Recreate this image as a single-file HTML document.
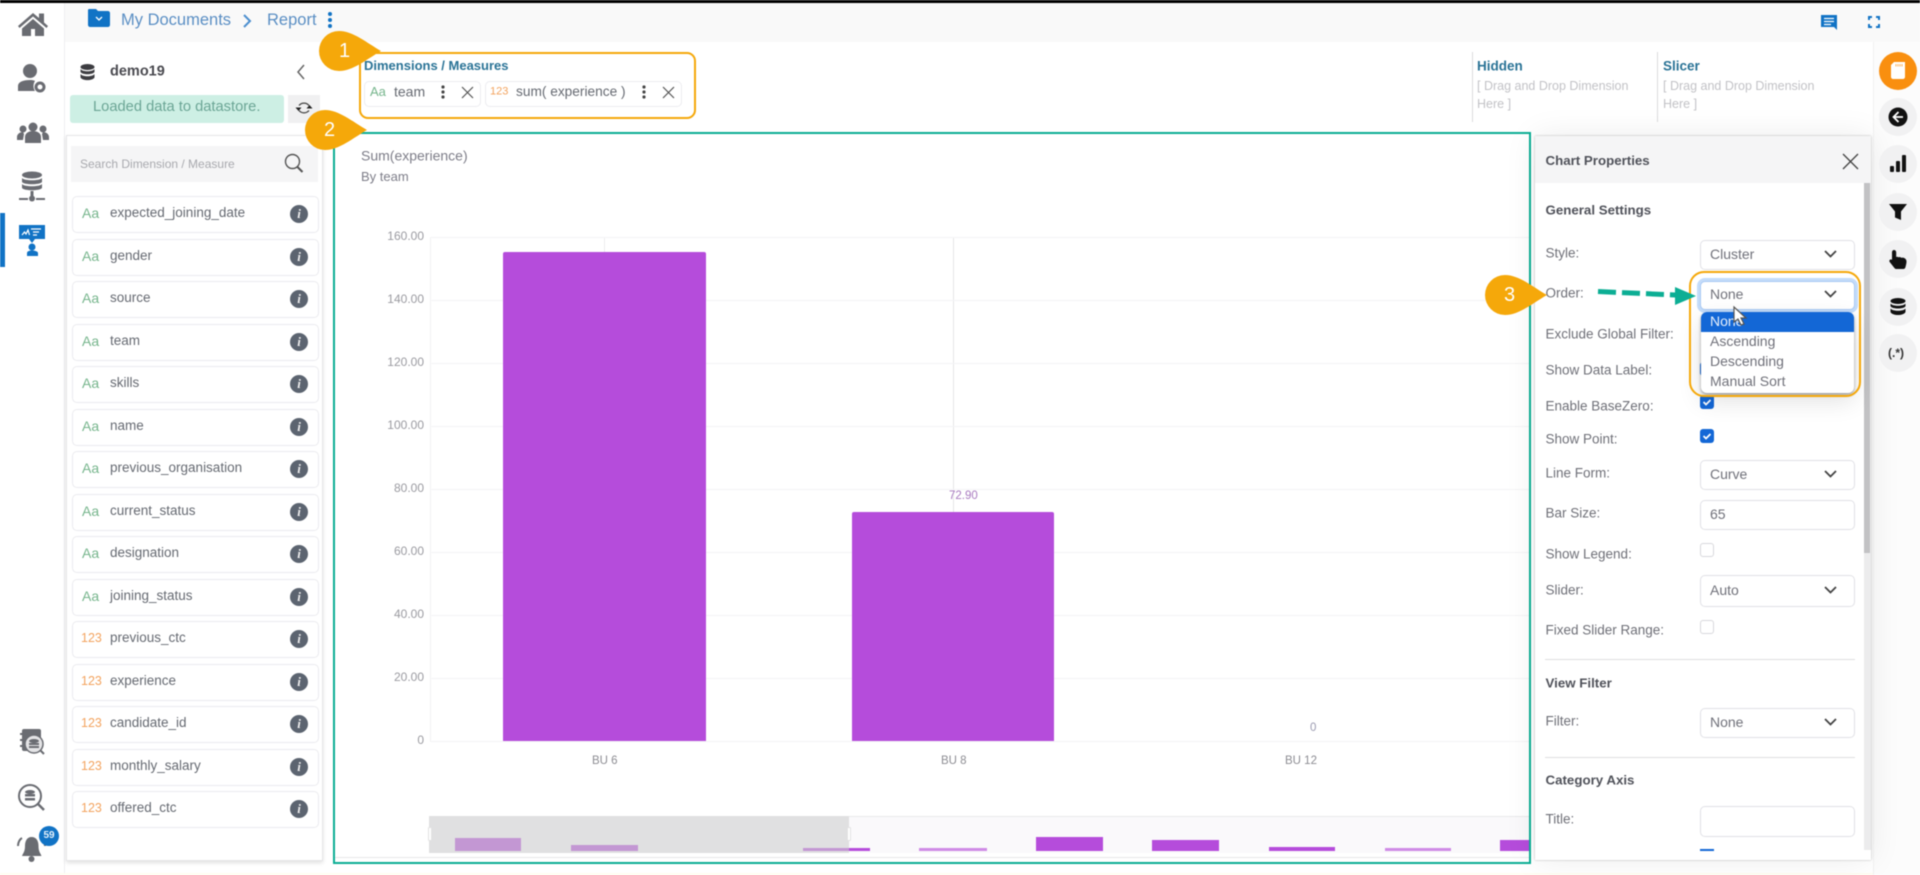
<!DOCTYPE html>
<html><head><meta charset="utf-8"><title>Report</title>
<style>
html,body{margin:0;padding:0;background:#fff;width:1920px;height:875px;overflow:hidden}
body{font-family:"Liberation Sans",sans-serif;color:#666}
#w{position:absolute;left:0;top:0;width:1920px;height:875px;overflow:hidden;filter:blur(.4px)}
.a{position:absolute}
.t{position:absolute;white-space:nowrap;transform:translateY(-50%);line-height:1.2}
.item{position:absolute;left:72px;width:245px;height:35px;border:1px solid #ebebef;border-radius:5px;background:#fff}
.item i{position:absolute;left:9px;top:8px;font-style:normal;font-size:14px;line-height:17px;color:#76b58c}
.item i.n{color:#f3a35e;font-size:12.5px;left:8px}
.item span{position:absolute;left:37px;top:7px;font-size:13.5px;line-height:17px;color:#666a72}
.item b{position:absolute;left:217px;top:8px;width:18px;height:18px;border-radius:50%;background:#5c6470;color:#eee;font:italic bold 13px/18px "Liberation Serif",serif;text-align:center}
.sel{position:absolute;left:1700px;width:153px;border:1px solid #e1e1e6;border-radius:5px;background:#fff;font-size:14px;color:#70717a}
.sel span{position:absolute;left:9px;top:50%;margin-top:-1px;transform:translateY(-50%)}
.sel svg{position:absolute;right:17px;top:50%;margin-top:-5px}
.lb{position:absolute;left:1545.5px;white-space:nowrap;transform:translateY(-50%);font-size:13.5px;color:#6f7078}
.h{position:absolute;left:1545.5px;white-space:nowrap;transform:translateY(-50%);font-size:13.3px;font-weight:bold;color:#50525a}
.cb{position:absolute;left:1700px;width:14px;height:14px;border-radius:3px;background:#1367d6}
.cb.o{background:#fff;border:1px solid #d8d8dc;width:12px;height:12px}
.rc{position:absolute;left:1879px;width:38px;height:38px;border-radius:50%;background:#f1f1f2}
.ax{position:absolute;font-size:12px;color:#9a9aa0;transform:translateY(-50%);text-align:right;width:60px;left:364px}
.gl{position:absolute;left:430px;width:1100px;height:1px;background:#f4f4f6}
.sb{position:absolute}
.chip{position:absolute;top:81px;height:24px;border:1px solid #ececf0;border-radius:5px;background:#fff}
.dr{position:absolute;font-size:12.5px;color:#c2c2c6;white-space:nowrap}
.hd{position:absolute;top:66px;transform:translateY(-50%);font-size:13.5px;font-weight:bold;color:#2a7396}
.op{position:absolute;left:1710px;font-size:14px;color:#70717a;transform:translateY(-50%)}
</style></head><body><div id="w">

<div class="a" style="left:0;top:0;width:1920px;height:3px;background:#000"></div>
<div class="a" style="left:64px;top:3px;width:1856px;height:39px;background:#f9f9f9"></div>
<div class="a" style="left:64px;top:3px;width:1px;height:870px;background:#efeff1"></div>
<div class="a" style="left:0;top:873px;width:1873px;height:2px;background:#fffdf1"></div>
<div class="a" style="left:1873px;top:42px;width:47px;height:833px;background:#fcfcfc;border-left:1px solid #f2f2f2"></div>

<!-- left nav -->
<svg class="a" style="left:0;top:0" width="64" height="875" fill="#6a6c72">
<path d="M33 13L18 26l1.500 2L33 16.500 46.500 28l1.500-2-4-3.500V13.500h-5V18z"/><path d="M22 28.500L33 19l11 9.500V36h-9v-7h-4v7h-9z"/>
<circle cx="30" cy="71" r="7"/><path d="M18 91v-5c0-4 5-6 12-6 2 0 4 .3 5 1-2 3-2 7 0 10z"/><circle cx="40" cy="87" r="4" fill="none" stroke="#6a6c72" stroke-width="3"/>
<circle cx="33" cy="127" r="4.500"/><circle cx="23" cy="129" r="3.500"/><circle cx="43" cy="129" r="3.500"/><path d="M25 143v-6c0-4 4-6 8-6s8 2 8 6v6z"/><path d="M17 140v-3c0-3 3-5 6-5l1 2-1 6zM49 140v-3c0-3-3-5-6-5l-1 2 1 6z"/>
<ellipse cx="32" cy="175" rx="10" ry="3.500"/><path d="M22 178c2 3 18 3 20 0v4c-2 3-18 3-20 0zM22 184c2 3 18 3 20 0v4c-2 3-18 3-20 0z"/><rect x="30.500" y="191" width="3" height="6"/><rect x="19" y="198" width="9" height="2"/><rect x="36" y="198" width="9" height="2"/><circle cx="32" cy="198.500" r="3"/>
<path fill="#1173c5" d="M19 225h26v14H35l-3 4-3-4H19z"/><path stroke="#fff" stroke-width="1.200" fill="none" d="M22 235l2.500-3 1.500 2 2-4 1.500 5M31 229h3M33 229h8M33 232h6M33 235h4"/><circle cx="32" cy="247" r="3.500" fill="#1173c5"/><path fill="#1173c5" d="M27 256v-3c0-1.500 2-2.500 5-2.500s6 1 6 2.500v3z"/>
<rect x="0" y="213" width="5" height="54" fill="#1173c5"/>
<rect x="22" y="729" width="19" height="22" rx="2"/><rect x="20" y="733" width="3" height="2"/><rect x="20" y="739" width="3" height="2"/><rect x="20" y="745" width="3" height="2"/><circle cx="34" cy="744" r="9" fill="#e4e4e6" stroke="#6a6c72" stroke-width="1.500"/><ellipse cx="34" cy="741" rx="5" ry="2"/><rect x="29" y="743" width="10" height="2"/><rect x="29" y="746" width="10" height="2"/><path d="M40 750l4 4" stroke="#6a6c72" stroke-width="2"/>
<circle cx="30" cy="796" r="11" fill="#fff" stroke="#6a6c72" stroke-width="2"/><ellipse cx="30" cy="792" rx="5" ry="2"/><rect x="25" y="794" width="10" height="2.500"/><rect x="25" y="798" width="10" height="2.500"/><path d="M38 804l6 6" stroke="#6a6c72" stroke-width="2.500"/>
<path d="M31.500 837c5 0 7 4 7 9 0 6 2 7 3 10H22c1-3 3-4 3-10 0-5 2-9 6.500-9z"/><circle cx="31.500" cy="859" r="3"/><path d="M18 846c0-4 2-7 4-8M45 846c0-4-2-7-4-8" fill="none" stroke="#6a6c72" stroke-width="2"/>
<circle cx="49" cy="836" r="10" fill="#1173c5"/>
</svg>
<div class="a" style="left:39px;top:829px;width:20px;text-align:center;font-size:10px;font-weight:bold;line-height:14px;color:#e6f1fa">59</div>

<!-- breadcrumb -->
<svg class="a" style="left:88px;top:9px" width="22" height="18"><path fill="#1173c5" d="M1 0h7l2 2h10c1 0 2 1 2 2v12c0 1-1 2-2 2H2c-1 0-2-1-2-2V1c0-.5.5-1 1-1z"/><path d="M8 8l3 3 3-3" stroke="#fff" fill="none" stroke-width="1.300"/></svg>
<div class="t" style="left:121px;top:20.500px;font-size:16.500px;color:#5b8fc4">My Documents</div>
<svg class="a" style="left:242px;top:14px" width="10" height="14"><path d="M2 1l6 6-6 6" fill="none" stroke="#4d8fcf" stroke-width="2"/></svg>
<div class="t" style="left:267px;top:20.500px;font-size:16.500px;color:#5b8fc4">Report</div>
<svg class="a" style="left:326px;top:11px" width="8" height="18" fill="#1173c5"><circle cx="4" cy="3" r="2"/><circle cx="4" cy="9" r="2"/><circle cx="4" cy="15" r="2"/></svg>
<svg class="a" style="left:1821px;top:14px" width="17" height="16"><path fill="#1173c5" d="M0 1h16v15l-3-3H0z"/><path stroke="#fff" stroke-width="1.300" d="M3 4.500h10M3 7.500h10M3 10.500h7"/></svg>
<svg class="a" style="left:1868px;top:16px" width="12" height="12" fill="none" stroke="#1173c5" stroke-width="2"><path d="M1 4V1h3M8 1h3v3M11 8v3H8M4 11H1V8"/></svg>

<!-- left panel head -->
<svg class="a" style="left:80px;top:64px" width="15" height="17" fill="#3c3c40"><ellipse cx="7.500" cy="3" rx="7" ry="3"/><path d="M.5 5c2 3 12 3 14 0v3c-2 3-12 3-14 0zM.5 10c2 3 12 3 14 0v3.500c-2 3.500-12 3.500-14 0z"/></svg>
<div class="t" style="left:110px;top:72px;font-size:14.500px;font-weight:bold;color:#4a4a50">demo19</div>
<svg class="a" style="left:296px;top:64px" width="10" height="16"><path d="M8 1L2 8l6 7" fill="none" stroke="#666" stroke-width="1.500"/></svg>
<div class="a" style="left:70px;top:95px;width:214px;height:28px;border-radius:3px;background:#cdefe4"></div>
<div class="t" style="left:93px;top:108px;font-size:14.700px;color:#6ba595">Loaded data to datastore.</div>
<div class="a" style="left:288px;top:95px;width:32px;height:28px;background:#f0f0f1"></div>
<svg class="a" style="left:294px;top:98px" width="20" height="20" fill="none"><path d="M5 7.500A6.500 6.500 0 0 1 15 7.500M15 12.500A6.500 6.500 0 0 1 5 12.500" stroke="#444" stroke-width="1.300"/><path d="M1.500 9.500h6L4.500 13z" fill="#222"/><path d="M18.500 10.500h-6L15.500 7z" fill="#222"/></svg>

<!-- list panel -->
<div class="a" style="left:66px;top:135px;width:257px;height:726px;background:#fff;border:1px solid #e6e6e8;box-shadow:0 2px 4px rgba(0,0,0,.12);box-sizing:border-box"></div>
<div class="a" style="left:71px;top:146px;width:247px;height:36px;background:#f5f5f6"></div>
<div class="t" style="left:80px;top:164px;font-size:12px;color:#a8a9ae">Search Dimension / Measure</div>
<svg class="a" style="left:284px;top:153px" width="20" height="21" fill="none" stroke="#555"><circle cx="8.500" cy="8.500" r="7" stroke-width="1.400"/><path d="M13.500 14l5 5" stroke-width="2"/></svg>

<div class="item" style="top:196px"><i>Aa</i><span>expected_joining_date</span><b>i</b></div>
<div class="item" style="top:238.500px"><i>Aa</i><span>gender</span><b>i</b></div>
<div class="item" style="top:281px"><i>Aa</i><span>source</span><b>i</b></div>
<div class="item" style="top:323.500px"><i>Aa</i><span>team</span><b>i</b></div>
<div class="item" style="top:366px"><i>Aa</i><span>skills</span><b>i</b></div>
<div class="item" style="top:408.500px"><i>Aa</i><span>name</span><b>i</b></div>
<div class="item" style="top:451px"><i>Aa</i><span>previous_organisation</span><b>i</b></div>
<div class="item" style="top:493.500px"><i>Aa</i><span>current_status</span><b>i</b></div>
<div class="item" style="top:536px"><i>Aa</i><span>designation</span><b>i</b></div>
<div class="item" style="top:578.500px"><i>Aa</i><span>joining_status</span><b>i</b></div>
<div class="item" style="top:621px"><i class="n">123</i><span>previous_ctc</span><b>i</b></div>
<div class="item" style="top:663.500px"><i class="n">123</i><span>experience</span><b>i</b></div>
<div class="item" style="top:706px"><i class="n">123</i><span>candidate_id</span><b>i</b></div>
<div class="item" style="top:748.500px"><i class="n">123</i><span>monthly_salary</span><b>i</b></div>
<div class="item" style="top:791px"><i class="n">123</i><span>offered_ctc</span><b>i</b></div>

<!-- dimension box -->
<div class="a" style="left:359px;top:52px;width:337px;height:67px;box-sizing:border-box;border:2px solid #f5a80a;border-radius:9px"></div>
<div class="t" style="left:364px;top:66px;font-size:13px;font-weight:bold;color:#2a7396">Dimensions / Measures</div>
<div class="chip" style="left:364px;width:115px"></div>
<div class="chip" style="left:485px;width:195px"></div>
<div class="t" style="left:370px;top:92px;font-size:13px;color:#76b58c">Aa</div>
<div class="t" style="left:394px;top:92px;font-size:14px;color:#666a72">team</div>
<div class="t" style="left:490px;top:92px;font-size:11px;color:#f3a35e">123</div>
<div class="t" style="left:516px;top:92px;font-size:13.700px;color:#666a72">sum( experience )</div>
<svg class="a" style="left:440px;top:84px" width="6" height="16" fill="#444"><circle cx="3" cy="3" r="1.600"/><circle cx="3" cy="8" r="1.600"/><circle cx="3" cy="13" r="1.600"/></svg>
<svg class="a" style="left:641px;top:84px" width="6" height="16" fill="#444"><circle cx="3" cy="3" r="1.600"/><circle cx="3" cy="8" r="1.600"/><circle cx="3" cy="13" r="1.600"/></svg>
<svg class="a" style="left:461px;top:86px" width="13" height="13" stroke="#555" stroke-width="1.200"><path d="M1 1l11 11M12 1L1 12"/></svg>
<svg class="a" style="left:662px;top:86px" width="13" height="13" stroke="#555" stroke-width="1.200"><path d="M1 1l11 11M12 1L1 12"/></svg>

<!-- hidden / slicer -->
<div class="a" style="left:1472px;top:52px;width:1px;height:70px;background:#dcdcde"></div>
<div class="a" style="left:1657px;top:52px;width:1px;height:70px;background:#dcdcde"></div>
<div class="hd" style="left:1477px">Hidden</div>
<div class="hd" style="left:1663px">Slicer</div>
<div class="dr" style="left:1477px;top:78.500px">[ Drag and Drop Dimension</div>
<div class="dr" style="left:1477px;top:97px">Here ]</div>
<div class="dr" style="left:1663px;top:78.500px">[ Drag and Drop Dimension</div>
<div class="dr" style="left:1663px;top:97px">Here ]</div>

<!-- chart -->
<div class="t" style="left:361px;top:156px;font-size:14px;color:#7d7d88">Sum(experience)</div>
<div class="t" style="left:361px;top:177px;font-size:13px;color:#7d7d88">By team</div>
<div class="a" style="left:430px;top:237px;width:1px;height:504px;background:#f1f1f3"></div>
<div class="a" style="left:604px;top:237px;width:1px;height:504px;background:#ececee"></div>
<div class="a" style="left:953px;top:237px;width:1px;height:504px;background:#e6e6e8"></div>
<div class="gl" style="top:237px"></div><div class="gl" style="top:300px"></div><div class="gl" style="top:363px"></div><div class="gl" style="top:426px"></div><div class="gl" style="top:489px"></div><div class="gl" style="top:552px"></div><div class="gl" style="top:615px"></div><div class="gl" style="top:678px"></div><div class="gl" style="top:741px"></div>
<div class="ax" style="top:236px">160.00</div><div class="ax" style="top:299px">140.00</div><div class="ax" style="top:362px">120.00</div><div class="ax" style="top:425px">100.00</div><div class="ax" style="top:488px">80.00</div><div class="ax" style="top:551px">60.00</div><div class="ax" style="top:614px">40.00</div><div class="ax" style="top:677px">20.00</div><div class="ax" style="top:740px">0</div>
<div class="a" style="left:503px;top:252px;width:203px;height:489px;background:#b54cdb;border-radius:2px 2px 0 0"></div>
<div class="a" style="left:852px;top:512px;width:202px;height:229px;background:#b54cdb;border-radius:2px 2px 0 0"></div>
<div class="t" style="left:949px;top:497px;font-size:11.500px;color:#a97ac0">72.90</div>
<div class="t" style="left:1310px;top:729px;font-size:11.500px;color:#9a9ab0">0</div>
<div class="t" style="left:592px;top:761.500px;font-size:11.500px;color:#8c8c92">BU 6</div>
<div class="t" style="left:941px;top:761.500px;font-size:11.500px;color:#8c8c92">BU 8</div>
<div class="t" style="left:1285px;top:761.500px;font-size:11.500px;color:#8c8c92">BU 12</div>

<!-- slider -->
<div class="a" style="left:429px;top:816px;width:1101px;height:37px;background:#faf9fb;border-top:1px solid #e9e9ea;box-sizing:border-box"></div>
<div class="a" style="left:334px;top:857px;width:1196px;height:1px;background:#e8e8ea"></div>
<div class="sb" style="left:1036px;top:837px;width:67px;height:14px;background:#b54cdb"></div>
<div class="sb" style="left:1152px;top:840px;width:67px;height:11px;background:#b54cdb"></div>
<div class="sb" style="left:1269px;top:847px;width:66px;height:4px;background:#b54cdb"></div>
<div class="sb" style="left:1385px;top:848px;width:66px;height:3px;background:#cf8be6"></div>
<div class="sb" style="left:1500px;top:840px;width:30px;height:11px;background:#b54cdb"></div>
<div class="sb" style="left:919px;top:848px;width:68px;height:3px;background:#cf8be6"></div>
<div class="sb" style="left:849px;top:848px;width:21px;height:3px;background:#b54cdb"></div>
<div class="a" style="left:429px;top:816px;width:420px;height:37px;background:#e0e0e1"></div>
<div class="sb" style="left:455px;top:838px;width:66px;height:13px;background:#c397d3"></div>
<div class="sb" style="left:571px;top:845px;width:67px;height:6px;background:#c397d3"></div>
<div class="sb" style="left:803px;top:848px;width:46px;height:3px;background:#c397d3"></div>
<div class="a" style="left:428px;top:827px;width:4px;height:14px;background:#fff;border:1px solid #e2e2e2;box-sizing:border-box;border-radius:1px"></div>
<div class="a" style="left:847px;top:827px;width:4px;height:14px;background:#fff;border:1px solid #e2e2e2;box-sizing:border-box;border-radius:1px"></div>

<!-- teal frame -->
<div class="a" style="left:333px;top:132px;width:1198px;height:732px;box-sizing:border-box;border:2px solid #0cae94"></div>

<!-- chart properties -->
<div class="a" style="left:1535px;top:136px;width:336px;height:724px;background:#fff;box-shadow:0 0 2px rgba(0,0,0,.3),0 0 30px rgba(0,0,0,.08)"></div>
<div class="a" style="left:1535px;top:136px;width:336px;height:47px;background:#f5f5f6"></div>
<div class="t" style="left:1545.5px;top:161px;font-size:13.300px;font-weight:bold;color:#50525a">Chart Properties</div>
<svg class="a" style="left:1842px;top:153px" width="17" height="17" stroke="#444" stroke-width="1.300"><path d="M1 1l15 15M16 1L1 16"/></svg>
<div class="a" style="left:1864px;top:183px;width:7px;height:667px;background:#ececed"></div>
<div class="a" style="left:1864px;top:183px;width:6px;height:370px;background:#c2c2c4"></div>

<div class="h" style="top:210px">General Settings</div>
<div class="lb" style="top:253px">Style:</div>
<div class="lb" style="top:293px">Order:</div>
<div class="lb" style="top:334px">Exclude Global Filter:</div>
<div class="lb" style="top:370px">Show Data Label:</div>
<div class="lb" style="top:406px">Enable BaseZero:</div>
<div class="lb" style="top:439px">Show Point:</div>
<div class="lb" style="top:473px">Line Form:</div>
<div class="lb" style="top:513px">Bar Size:</div>
<div class="lb" style="top:554px">Show Legend:</div>
<div class="lb" style="top:590px">Slider:</div>
<div class="lb" style="top:630px">Fixed Slider Range:</div>
<div class="h" style="top:683px">View Filter</div>
<div class="lb" style="top:721px">Filter:</div>
<div class="h" style="top:780px">Category Axis</div>
<div class="lb" style="top:819px">Title:</div>

<div class="sel" style="top:240px;height:28px"><span>Cluster</span><svg width="13" height="8" fill="none" stroke="#444" stroke-width="1.800"><path d="M1 1l5.500 5.500L12 1"/></svg></div>
<div class="cb" style="top:362px"></div>
<svg class="a" style="left:1700px;top:395px" width="14" height="14"><rect width="14" height="14" rx="3" fill="#1367d6"/><path d="M3.500 7l2.500 2.500 4.500-4.500" fill="none" stroke="#fff" stroke-width="1.700"/></svg>
<svg class="a" style="left:1700px;top:429px" width="14" height="14"><rect width="14" height="14" rx="3" fill="#1367d6"/><path d="M3.500 7l2.500 2.500 4.500-4.500" fill="none" stroke="#fff" stroke-width="1.700"/></svg>
<div class="sel" style="top:460px;height:28px"><span>Curve</span><svg width="13" height="8" fill="none" stroke="#444" stroke-width="1.800"><path d="M1 1l5.500 5.500L12 1"/></svg></div>
<div class="sel" style="top:500px;height:28px"><span>65</span></div>
<div class="cb o" style="top:543px"></div>
<div class="sel" style="top:575px;height:30px"><span>Auto</span><svg width="13" height="8" fill="none" stroke="#444" stroke-width="1.800"><path d="M1 1l5.500 5.500L12 1"/></svg></div>
<div class="cb o" style="top:620px"></div>
<div class="a" style="left:1545px;top:659px;width:310px;height:1px;background:#dedee0"></div>
<div class="sel" style="top:708px;height:28px"><span>None</span><svg width="13" height="8" fill="none" stroke="#444" stroke-width="1.800"><path d="M1 1l5.500 5.500L12 1"/></svg></div>
<div class="a" style="left:1545px;top:757px;width:310px;height:1px;background:#dedee0"></div>
<div class="sel" style="top:806px;height:29px"></div>
<div class="a" style="left:1700px;top:849px;width:14px;height:2px;background:#1367d6"></div>

<!-- order select + dropdown -->
<div class="sel" style="top:281px;height:27px;box-shadow:0 0 0 3px #c4dcfa;border-color:#a9c9f3"><span style="margin-top:-2px">None</span><svg style="margin-top:-6px" width="13" height="8" fill="none" stroke="#444" stroke-width="1.800"><path d="M1 1l5.500 5.500L12 1"/></svg></div>
<div class="a" style="left:1701px;top:312px;width:153px;height:81px;background:#fff;border-radius:6px;box-shadow:0 2px 3px rgba(0,0,0,.35),0 8px 24px rgba(0,0,0,.12);overflow:hidden"><div class="a" style="left:0;top:0;width:153px;height:20px;background:#1367d6"></div></div>
<div class="op" style="top:321px;color:#e8f0fb">None</div>
<div class="op" style="top:341px">Ascending</div>
<div class="op" style="top:361px">Descending</div>
<div class="op" style="top:381px">Manual Sort</div>
<div class="a" style="left:1689px;top:271px;width:172px;height:126px;box-sizing:border-box;border:2px solid #f5a80a;border-radius:15px"></div>
<svg class="a" style="left:1730px;top:305px" width="20" height="24"><path d="M4 2v15l4-3 3 6 3-1-3-6h5z" fill="#fff" stroke="#555" stroke-width="1.200"/></svg>

<!-- arrow -->
<svg class="a" style="left:1595px;top:283px" width="105" height="26"><path d="M3 8.500l88 4" stroke="#0cae94" stroke-width="5" stroke-dasharray="18 6" fill="none"/><path d="M80 10l0-6 21 9-21 9 0-6z" fill="#0cae94"/></svg>

<!-- right rail -->
<div class="a" style="left:1879px;top:52px;width:38px;height:38px;border-radius:50%;background:#f98f0f"></div>
<svg class="a" style="left:1891px;top:62px" width="14" height="17"><path fill="#fff" d="M3 0h11v15c0 1-1 2-2 2H2c-1 0-2-1-2-2V3z"/><path stroke="#f98f0f" stroke-width=".7" d="M5 2v2.500M7 2v2.500M9 2v2.500M11 2v2.500"/></svg>
<div class="rc" style="top:98px"></div><div class="rc" style="top:145px"></div><div class="rc" style="top:193px"></div><div class="rc" style="top:240px"></div><div class="rc" style="top:288px"></div><div class="rc" style="top:334px"></div>
<svg class="a" style="left:1888px;top:107px" width="20" height="20"><circle cx="10" cy="10" r="9.500" fill="#111"/><path d="M10.500 5l-5 5 5 5M6 10h9" fill="none" stroke="#fff" stroke-width="1.800"/></svg>
<svg class="a" style="left:1890px;top:155px" width="16" height="17" fill="#111"><rect y="11" width="4" height="6" rx="1"/><rect x="6" y="6" width="4" height="11" rx="1"/><rect x="12" y="0" width="4" height="17" rx="1"/></svg>
<svg class="a" style="left:1889px;top:204px" width="18" height="16" fill="#111"><path d="M0 0h18l-6 7.500V16l-6-2.500V7.500z"/></svg>
<svg class="a" style="left:1889px;top:250px" width="18" height="19" fill="#111"><path d="M5 0c1.200 0 2.200 1 2.200 2.200V7l1-.3 1.300.6 1.500-.3 1.300.7 1.500-.1c2 .3 3.700 1.700 3.700 3.900 0 1.500-.5 3.500-1 5.500-.3 1.200-1 2-2.200 2H7.500c-1 0-1.700-.5-2.300-1.300L.7 12c-1.100-1.400.6-3.400 2.200-2.300L3 9.800V2.200C3 1 3.900 0 5 0z"/></svg>
<svg class="a" style="left:1890px;top:298px" width="16" height="18" fill="#111"><ellipse cx="8" cy="3" rx="7.500" ry="3"/><path d="M.5 5.500c2 3 13 3 15 0v2.700c-2 3-13 3-15 0zM.5 10.500c2 3 13 3 15 0v3.500c-2 4-13 4-15 0z"/></svg>
<div class="t" style="left:1888px;top:353px;font-size:12px;color:#333;font-weight:bold">(.*)</div>

<!-- teardrops -->
<svg class="a" style="left:319px;top:31px" width="63" height="40"><path fill="#f5a80a" d="M20 0C34 0 48 12 62 20 48 28 34 40 20 40A20 20 0 0 1 20 0Z"/></svg>
<div class="t" style="left:339px;top:51px;font-size:20px;color:#fff">1</div>
<svg class="a" style="left:305px;top:110px" width="63" height="40"><path fill="#f5a80a" d="M20 0C34 0 48 12 62 20 48 28 34 40 20 40A20 20 0 0 1 20 0Z"/></svg>
<div class="t" style="left:324px;top:130px;font-size:20px;color:#fff">2</div>
<svg class="a" style="left:1485px;top:275px" width="63" height="40"><path fill="#f5a80a" d="M20 0C34 0 48 12 62 20 48 28 34 40 20 40A20 20 0 0 1 20 0Z"/></svg>
<div class="t" style="left:1504px;top:295px;font-size:20px;color:#fff">3</div>

</div></body></html>
